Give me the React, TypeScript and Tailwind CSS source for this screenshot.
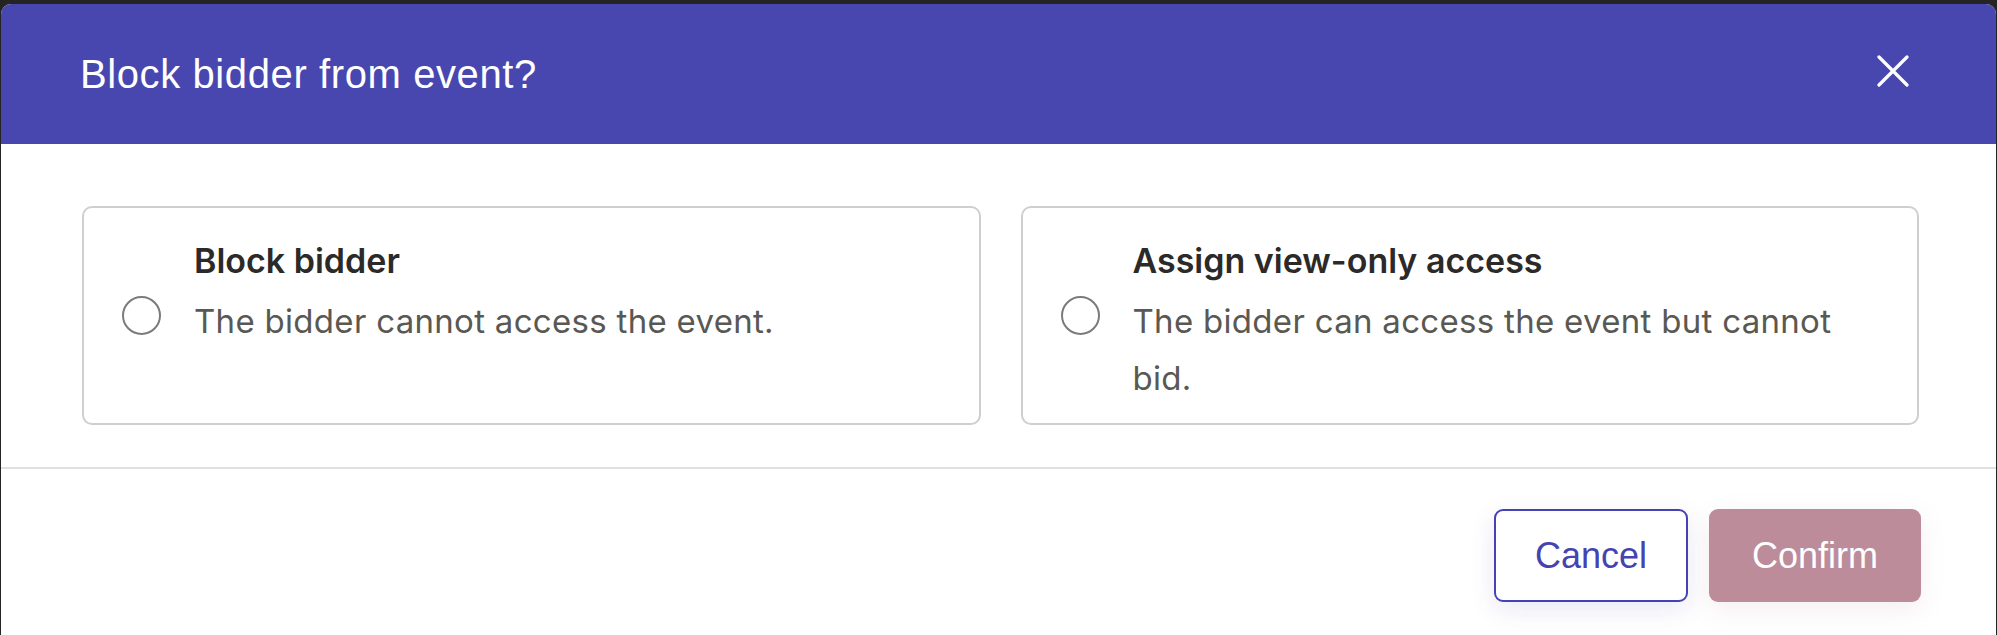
import React, { useState } from 'react'

const options = [
  { id: 'block', title: 'Block bidder', body: 'The bidder cannot access the event.' },
  { id: 'view', title: 'Assign view-only access', body: 'The bidder can access the event but cannot bid.' },
]

export default function App() {
  const [choice, setChoice] = useState<string | null>(null)

  return (
    <div className="min-h-screen bg-[#242424] pt-[4px] px-[1px]">
      <div className="h-[631px] overflow-hidden rounded-t-[10px] bg-white">
        {/* Header */}
        <div className="flex h-[140px] items-center justify-between bg-[#4847b0] pl-[79px] pr-[87px]">
          <h1 className="font-['Liberation_Sans',Arial,sans-serif] text-[40px] tracking-[0.6px] text-white">
            Block bidder from event?
          </h1>
          <button className="mb-[6px] text-white">
            <svg width="32" height="32" viewBox="0 0 32 32" fill="none" stroke="currentColor" strokeWidth="3.2" strokeLinecap="round">
              <path d="M2 2L30 30M30 2L2 30" />
            </svg>
          </button>
        </div>

        {/* Options */}
        <div className="grid grid-cols-2 gap-[40px] pl-[81px] pr-[77px] pt-[62px]">
          {options.map((o) => (
            <label
              key={o.id}
              onClick={() => setChoice(o.id)}
              className="flex h-[219px] cursor-pointer rounded-[10px] border-2 border-[#cfcfcc] pl-[38px] pr-[36px] pt-[33px]"
            >
              <span className="mb-[33px] mr-[33px] flex h-[39px] w-[39px] shrink-0 items-center justify-center self-center rounded-full border-2 border-[#7b7b78]">
                {choice === o.id && <span className="h-[19px] w-[19px] rounded-full bg-[#4847b0]" />}
              </span>
              <div className="font-['Inter',sans-serif]">
                <div className="text-[34px] leading-[40px] font-semibold text-[#2b2a28]">{o.title}</div>
                <p className="mt-[12px] text-[33px] leading-[57px] tracking-[0.3px] text-[#5a5853]">{o.body}</p>
              </div>
            </label>
          ))}
        </div>

        <div className="mt-[42px] h-[2px] bg-[#e1e1e1]" />

        {/* Footer */}
        <div className="flex justify-end gap-[21px] pr-[75px] pt-[40px] font-['Liberation_Sans',Arial,sans-serif] text-[36px]">
          <button className="h-[93px] w-[194px] rounded-[9px] border-2 border-[#4543b2] bg-white text-[#4543b2] shadow-[0_8px_24px_rgba(72,71,176,0.12)]">
            Cancel
          </button>
          <button className="h-[93px] w-[212px] rounded-[9px] bg-[#bd8c9b] text-white shadow-[0_8px_24px_rgba(189,140,155,0.15)]">
            Confirm
          </button>
        </div>
      </div>
    </div>
  )
}
